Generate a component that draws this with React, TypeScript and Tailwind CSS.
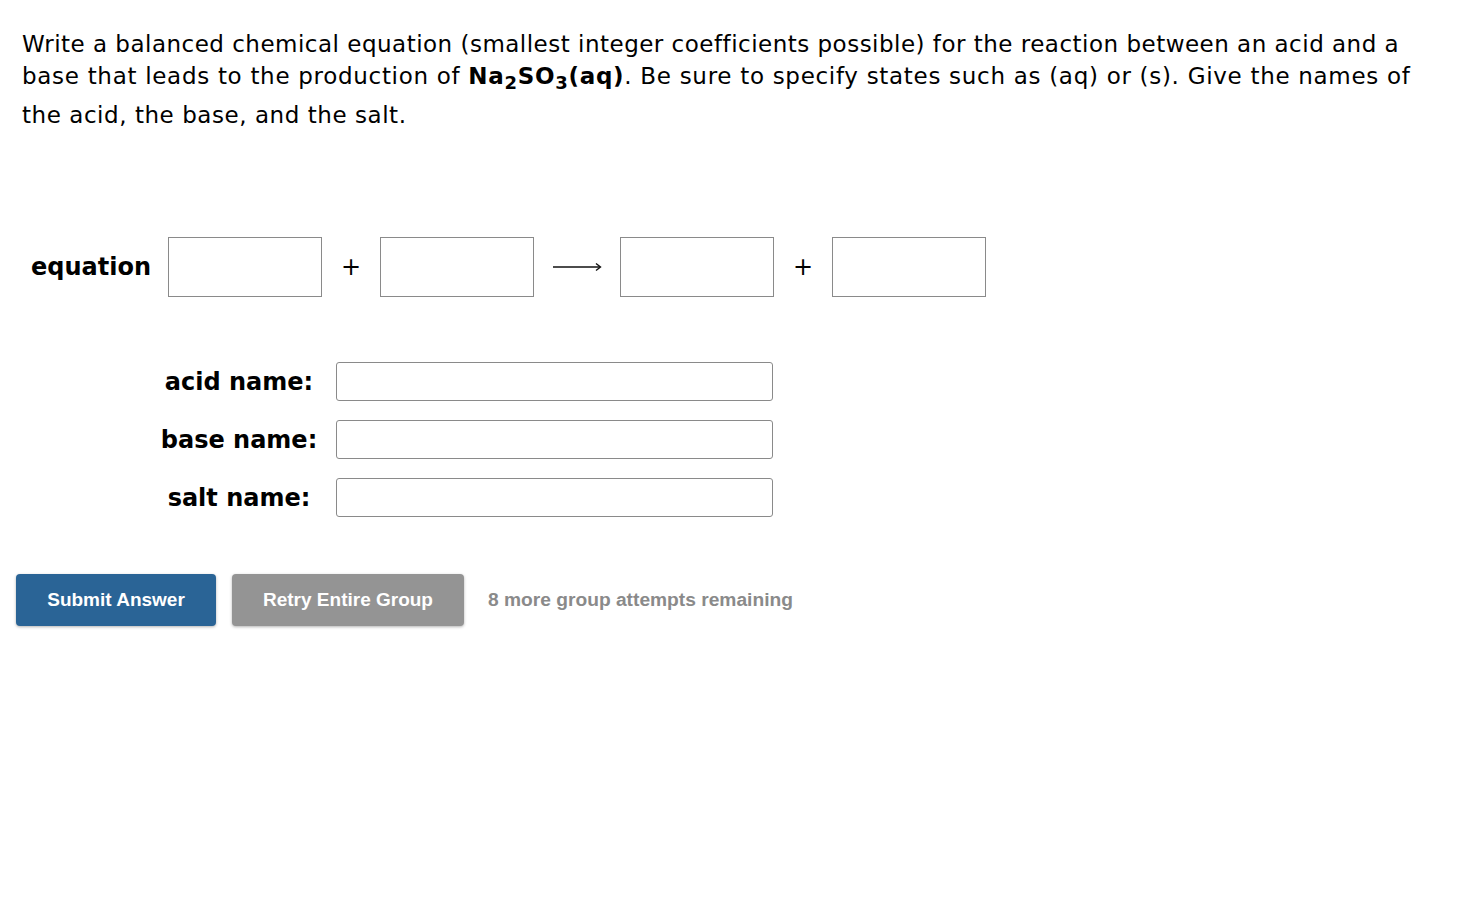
import React from "react"

const verdana = "font-['Verdana','DejaVu_Sans',sans-serif]"
const arial = "font-['Arial','Liberation_Sans',sans-serif]"

function Box() {
  return <div className="w-[154px] h-[60px] border border-[#8a8a8a] bg-white" />
}

function NameRow({ label }: { label: string }) {
  return (
    <div className="flex items-center">
      <div className="w-[194px] text-center text-[24px] font-bold text-black">{label}</div>
      <input className="w-[437px] h-[39px] border border-[#8a8a8a] rounded-[3px] bg-white outline-none" />
    </div>
  )
}

export default function App() {
  return (
    <div className={`min-h-screen bg-white ${verdana} text-black`}>
      {/* Question */}
      <div className="pl-[22px] pt-[28px] text-[23px] whitespace-nowrap">
        <div className="leading-[32px] tracking-[0.49px]">
          Write a balanced chemical equation (smallest integer coefficients possible) for the reaction between an acid and a
        </div>
        <div className="leading-[32px] pb-[7px] tracking-[0.7px]">
          base that leads to the production of{" "}
          <b>
            Na<sub className="text-[18px]">2</sub>SO<sub className="text-[18px]">3</sub>(aq)
          </b>
          . Be sure to specify states such as (aq) or (s). Give the names of
        </div>
        <div className="leading-[32px] tracking-[0.55px]">the acid, the base, and the salt.</div>
      </div>

      {/* Equation */}
      <div className="flex items-center mt-[106px] pl-[31px]">
        <div className="w-[137px] text-[24px] font-bold">equation</div>
        <Box />
        <div className="w-[58px] text-center text-[24px]">+</div>
        <Box />
        <div className="w-[86px] flex justify-center">
          <svg width="49" height="10" viewBox="0 0 49 10" fill="none" stroke="#111" strokeWidth="1.6">
            <path d="M0 5H47" />
            <path d="M43 1.5L47.5 5L43 8.5" strokeWidth="1.4" />
          </svg>
        </div>
        <Box />
        <div className="w-[58px] text-center text-[24px]">+</div>
        <Box />
      </div>

      {/* Names */}
      <div className="flex flex-col gap-[19px] mt-[65px] pl-[142px]">
        <NameRow label="acid name:" />
        <NameRow label="base name:" />
        <NameRow label="salt name:" />
      </div>

      {/* Actions */}
      <div className={`flex items-center mt-[57px] pl-[16px] ${arial}`}>
        <button className="w-[200px] h-[52px] rounded-[4px] bg-[#2a6496] text-white text-[19px] font-bold shadow-[0_1px_3px_rgba(0,0,0,0.3)]">
          Submit Answer
        </button>
        <button className="ml-[16px] w-[232px] h-[52px] rounded-[4px] bg-[#949494] text-white text-[19px] font-bold shadow-[0_1px_3px_rgba(0,0,0,0.3)]">
          Retry Entire Group
        </button>
        <span className="ml-[24px] text-[19.2px] font-bold text-[#8a8a8a]">8 more group attempts remaining</span>
      </div>
    </div>
  )
}
